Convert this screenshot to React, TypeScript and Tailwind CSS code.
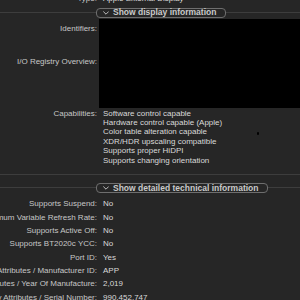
import React from "react";

const Chevron = () => (
  <svg width="6" height="4" viewBox="0 0 6 4" fill="none" className="shrink-0">
    <path d="M0.6 0.8L3 3.2L5.4 0.8" stroke="#bdbdbd" strokeWidth="1" strokeLinecap="round" strokeLinejoin="round" />
  </svg>
);

function Disclosure({ label }: { label: string }) {
  return (
    <div className="flex items-center h-[11px]">
      <div className="w-[96px] h-px bg-[#3d3d3d] shrink-0" />
      <button className="flex items-center gap-[4px] h-[10px] pl-[6px] pr-[9px] rounded-[4px] border border-[#6e6e6e] text-[#cacaca] font-bold text-[8.5px] leading-none whitespace-nowrap shrink-0">
        <Chevron />
        {label}
      </button>
      <div className="flex-1 h-px bg-[#3d3d3d]" />
    </div>
  );
}

function Row({ label, value }: { label: string; value: string }) {
  return (
    <div className="flex h-[13.4px] items-center">
      <div className="w-[97px] flex justify-end shrink-0 overflow-visible">
        <span className="whitespace-nowrap shrink-0 text-[#c6c6c6]">{label}</span>
      </div>
      <div className="pl-[6px] text-[#d9d9d9] whitespace-nowrap">{value}</div>
    </div>
  );
}

const capabilities = [
  "Software control capable",
  "Hardware control capable (Apple)",
  "Color table alteration capable",
  "XDR/HDR upscaling compatible",
  "Supports proper HiDPI",
  "Supports changing orientation",
];

const rows = [
  ["Supports Suspend:", "No"],
  ["Maximum Variable Refresh Rate:", "No"],
  ["Supports Active Off:", "No"],
  ["Supports BT2020c YCC:", "No"],
  ["Port ID:", "Yes"],
  ["Display Attributes / Manufacturer ID:", "APP"],
  ["Display Attributes / Year Of Manufacture:", "2,019"],
  ["Display Attributes / Serial Number:", "990,452,747"],
];

export default function App() {
  return (
    <div
      className="relative w-[300px] h-[300px] overflow-hidden bg-[#262626] text-[8px] leading-[9px]"
      style={{ fontFamily: '"Liberation Sans", Arial, sans-serif' }}
    >
      {/* type row, cut off at top */}
      <div className="flex h-[10px] mt-[-7px] items-center">
        <div className="w-[97px] flex justify-end shrink-0">
          <span className="text-[#c6c6c6]">Type:</span>
        </div>
        <div className="pl-[6px] text-[#d9d9d9] whitespace-nowrap">Apple External Display</div>
      </div>

      <div className="mt-[4px]">
        <Disclosure label="Show display information" />
      </div>

      {/* redacted identifiers */}
      <div className="flex mt-[1px]">
        <div className="w-[97px] shrink-0 flex flex-col items-end text-[#c6c6c6]">
          <span className="mt-[4.5px]">Identifiers:</span>
          <span className="mt-[24px]">I/O Registry Overview:</span>
        </div>
        <div className="ml-[2px] flex-1 h-[89px] bg-black" />
      </div>

      {/* capabilities */}
      <div className="flex leading-[9.4px] mt-[0.5px]">
        <div className="w-[97px] shrink-0 flex justify-end text-[#c6c6c6]">
          <span>Capabilities:</span>
        </div>
        <div className="pl-[6px] flex flex-col text-[#d9d9d9] whitespace-nowrap">
          {capabilities.map((c) => (
            <span key={c}>{c}</span>
          ))}
        </div>
      </div>

      <div className="mt-[9.5px] h-px bg-[#3d3d3d]" />

      <div className="mt-[7px]">
        <Disclosure label="Show detailed technical information" />
      </div>

      <div className="mt-[3.5px] flex flex-col">
        {rows.map(([l, v]) => (
          <Row key={l} label={l} value={v} />
        ))}
      </div>

      <div className="absolute left-[257px] top-[132px] w-[2px] h-[3px] bg-black rounded-[1px]" />
    </div>
  );
}
